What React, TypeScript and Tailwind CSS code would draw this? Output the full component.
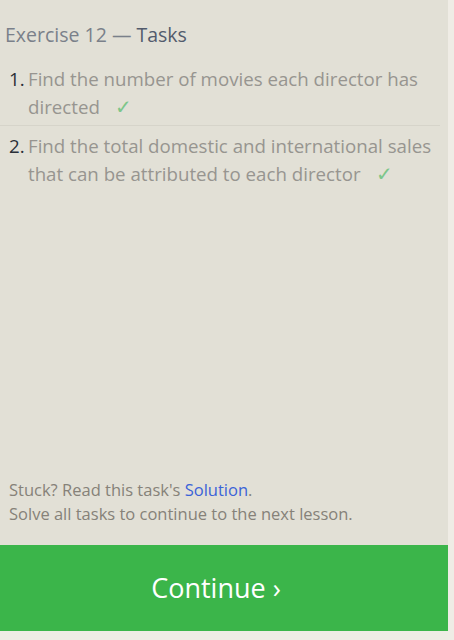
const tasks = [
  'Find the number of movies each director has directed',
  'Find the total domestic and international sales that can be attributed to each director',
]

export default function App() {
  return (
    <div
      className="flex h-[640px] w-full bg-[#efece5]"
      style={{ fontFamily: '"Open Sans", "Noto Sans", sans-serif' }}
    >
      <div className="flex h-[631px] w-[448px] flex-col bg-[#e2e0d6]">
        <h2 className="pl-[5px] pt-[21px] text-[19.5px] leading-[28px] text-[#7a808a]">
          Exercise 12 — <span className="text-[#525b6c]">Tasks</span>
        </h2>

        <ol className="mt-[16px] pr-[8px]">
          {tasks.map((task, i) => (
            <li
              key={i}
              className={
                i === 0
                  ? 'flex border-b border-[#d6d4ca] pb-[4px] text-[18.7px] leading-[28px]'
                  : 'flex pt-[6px] text-[18.7px] leading-[28px]'
              }
            >
              <span className="w-[28px] shrink-0 pl-[9px] text-[#2a2f38]">
                {i + 1}.
              </span>
              <p className="text-[#979590]">
                {task}
                <span className="ml-[15px] inline-block text-[20px] leading-none text-[#7dc68a]">
                  ✓
                </span>
              </p>
            </li>
          ))}
        </ol>

        <div className="flex-1" />

        <div className="px-[9px] pb-[19px] text-[16.5px] leading-[24px] text-[#868279]">
          <p>
            Stuck? Read this task's{' '}
            <a className="text-[#3b63d8]">Solution</a>.
          </p>
          <p>Solve all tasks to continue to the next lesson.</p>
        </div>

        <button className="flex h-[86px] w-full items-center justify-center bg-[#3bb54a] pr-[16px] text-[27px] text-white">
          Continue ›
        </button>
      </div>
    </div>
  )
}
